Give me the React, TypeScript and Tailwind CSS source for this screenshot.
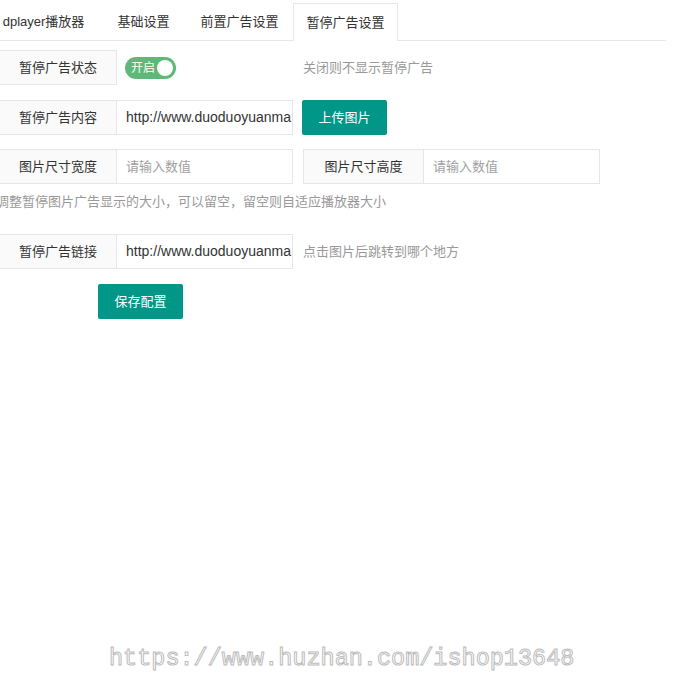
import React from "react";

const font = { fontFamily: '"Liberation Sans","Noto Sans CJK SC",Arial,sans-serif' };

function Label({ children, w = "w-[118px]", className = "" }: { children: React.ReactNode; w?: string; className?: string }) {
  return (
    <div
      className={`${w} h-[35px] shrink-0 flex items-center justify-center bg-[#fafafa] border border-[#e6e6e6] text-[13px] text-[#333] ${className}`}
    >
      {children}
    </div>
  );
}

function Input({ value, placeholder }: { value?: string; placeholder?: string }) {
  return (
    <div className="w-[176px] h-[35px] shrink-0 border border-l-0 border-[#e6e6e6] bg-white flex items-center pl-[9px] overflow-hidden whitespace-nowrap">
      {value ? <span className="text-[14px] text-[#333]">{value}</span> : <span className="text-[13px] text-[#a0a0a0]">{placeholder}</span>}
    </div>
  );
}

export default function App() {
  return (
    <div className="relative w-[684px] h-[698px] bg-white overflow-hidden" style={font}>
      {/* Tabs */}
      <div className="mt-[3px] w-[666px] h-[38px] border-b border-[#e8e8e8] flex text-[13px] text-[#333]">
        <div className="ml-[-14px] w-[115px] h-[37px] flex items-center justify-center">dplayer播放器</div>
        <div className="w-[85px] h-[37px] flex items-center justify-center">基础设置</div>
        <div className="w-[107px] h-[37px] flex items-center justify-center">前置广告设置</div>
        <div className="w-[105px] h-[38px] flex items-center justify-center border border-b-0 border-[#e8e8e8] bg-white -mb-px">
          暂停广告设置
        </div>
      </div>

      <div className="mt-[9px] flex flex-col">
        {/* Row 1 */}
        <div className="flex items-center h-[35px]">
          <Label className="ml-[-1px]">暂停广告状态</Label>
          <div className="w-[176px] shrink-0 pl-[8px] flex items-center">
            <div className="relative w-[51px] h-[22px] rounded-full bg-[#5FB878] flex items-center">
              <span className="pl-[6px] text-[12px] text-white leading-none">开启</span>
              <span className="absolute right-[3px] top-[3px] w-[16px] h-[16px] rounded-full bg-white" />
            </div>
          </div>
          <div className="ml-[10px] text-[13px] text-[#999]">关闭则不显示暂停广告</div>
        </div>

        {/* Row 2 */}
        <div className="mt-[15px] flex items-center h-[35px]">
          <Label className="ml-[-1px]">暂停广告内容</Label>
          <Input value="http://www.duoduoyuanma" />
          <button className="ml-[9px] w-[85px] h-[35px] rounded-[2px] bg-[#009688] text-white text-[13px]">上传图片</button>
        </div>

        {/* Row 3 */}
        <div className="mt-[14px] flex items-center h-[35px]">
          <Label className="ml-[-1px]">图片尺寸宽度</Label>
          <Input placeholder="请输入数值" />
          <Label w="w-[121px]" className="ml-[10px]">图片尺寸高度</Label>
          <Input placeholder="请输入数值" />
        </div>

        {/* help */}
        <div className="mt-[9px] ml-[-4px] h-[17px] text-[13px] leading-[17px] text-[#999] whitespace-nowrap">
          调整暂停图片广告显示的大小，可以留空，留空则自适应播放器大小
        </div>

        {/* Row 4 */}
        <div className="mt-[24px] flex items-center h-[35px]">
          <Label className="ml-[-1px]">暂停广告链接</Label>
          <Input value="http://www.duoduoyuanma" />
          <div className="ml-[10px] text-[13px] text-[#999]">点击图片后跳转到哪个地方</div>
        </div>

        {/* Save */}
        <div className="mt-[15px] flex">
          <button className="ml-[98px] w-[85px] h-[35px] rounded-[2px] bg-[#009688] text-white text-[13px]">保存配置</button>
        </div>
      </div>

      {/* watermark */}
      <div
        className="absolute left-[109px] top-[642px] text-[23.5px] leading-[34px] text-transparent whitespace-nowrap [-webkit-text-stroke:1px_#bcbcbc]"
        style={{ fontFamily: '"Liberation Mono","DejaVu Sans Mono",monospace' }}
      >
        https://www.huzhan.com/ishop13648
      </div>
    </div>
  );
}
